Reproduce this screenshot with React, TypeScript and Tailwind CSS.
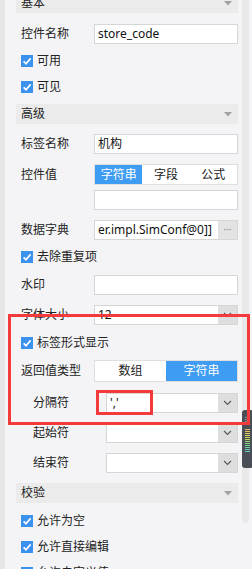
import React from "react";

const Tri = () => (
  <svg width="8" height="5" viewBox="0 0 8 5">
    <path d="M0 0 L8 0 L4 4.5 Z" fill="#a3a3a3" />
  </svg>
);

const Header = ({ title, mt }: { title: string; mt: string }) => (
  <div className={`${mt} h-[20px] shrink-0 bg-[#ebebeb] flex items-center justify-between pl-[5px] pr-[6px] text-[12px] text-[#222]`}>
    <span>{title}</span>
    <Tri />
  </div>
);

const Check = ({ label, mt }: { label: string; mt: string }) => (
  <div className={`${mt} h-[20px] shrink-0 flex items-center pl-[5px] gap-[4px] text-[12px] text-[#222]`}>
    <span className="w-[12px] h-[12px] bg-[#3a91ee] flex items-center justify-center">
      <svg width="12" height="12" viewBox="0 0 12 12">
        <path d="M2.6 6.3 L5 8.7 L9.6 3.4" stroke="#fff" strokeWidth="1.7" fill="none" />
      </svg>
    </span>
    <span>{label}</span>
  </div>
);

const Chevron = () => (
  <svg width="9" height="6" viewBox="0 0 9 6">
    <path d="M1 1 L4.5 4.5 L8 1" stroke="#555" strokeWidth="1.1" fill="none" />
  </svg>
);

const Row = ({
  label,
  mt,
  indent,
  h = "h-[20px]",
  children,
}: {
  label: string;
  mt: string;
  indent?: boolean;
  h?: string;
  children: React.ReactNode;
}) => (
  <div className={`${mt} ${h} shrink-0 flex items-center text-[12px] text-[#222]`}>
    <div className={indent ? "w-[90px] pl-[17px]" : "w-[78px] pl-[5px]"}>{label}</div>
    <div className="flex-1 h-full flex">{children}</div>
  </div>
);

const Input = ({ value = "", btn }: { value?: string; btn?: "dots" | "chev" }) => (
  <div className="flex-1 h-full bg-white border border-[#d6d6d6] flex items-stretch overflow-hidden">
    <div className="flex-1 pl-[3px] flex items-center whitespace-nowrap overflow-hidden text-[#111]">{value}</div>
    {btn === "dots" && (
      <div className="w-[19px] bg-[#e3e3e3] flex items-center justify-center text-[#888] text-[10px] leading-none pb-[2px]">
        ···
      </div>
    )}
    {btn === "chev" && (
      <div className="w-[19px] bg-[#dedede] flex items-center justify-center">
        <Chevron />
      </div>
    )}
  </div>
);

const Seg = ({ items, active }: { items: string[]; active: number }) => (
  <div className="flex-1 h-full bg-white border border-[#dedede] flex">
    {items.map((t, i) => (
      <div
        key={t}
        className={`flex-1 flex items-center justify-center ${i === active ? "bg-[#3f9cf3] text-white" : "text-[#222]"}`}
      >
        {t}
      </div>
    ))}
  </div>
);

export default function App() {
  return (
    <div className="relative w-[252px] h-[569px] overflow-hidden bg-[#f4f4f6] flex font-['Noto_Sans','Noto_Sans_CJK_SC',sans-serif]">
      <div className="w-[5px] shrink-0 bg-[#e6e6e6]" />
      <div className="ml-[11px] w-[222px] shrink-0 flex flex-col">
        <Header title="基本" mt="mt-[-7px]" />
        <Row label="控件名称" mt="mt-[11px]">
          <Input value="store_code" />
        </Row>
        <Check label="可用" mt="mt-[7px]" />
        <Check label="可见" mt="mt-[6px]" />
        <Header title="高级" mt="mt-[7px]" />
        <Row label="标签名称" mt="mt-[10px]">
          <Input value="机构" />
        </Row>
        <Row label="控件值" mt="mt-[10px]" h="h-[21px]">
          <Seg items={["字符串", "字段", "公式"]} active={0} />
        </Row>
        <div className="mt-[5px] h-[20px] shrink-0 pl-[78px] flex">
          <Input />
        </div>
        <Row label="数据字典" mt="mt-[10px]">
          <Input value="er.impl.SimConf@0]]" btn="dots" />
        </Row>
        <Check label="去除重复项" mt="mt-[7px]" />
        <Row label="水印" mt="mt-[8px]">
          <Input />
        </Row>
        <Row label="字体大小" mt="mt-[10px]">
          <Input value="12" btn="chev" />
        </Row>
        <Check label="标签形式显示" mt="mt-[8px]" />
        <Row label="返回值类型" mt="mt-[7px]" h="h-[22px]">
          <Seg items={["数组", "字符串"]} active={1} />
        </Row>
        <Row label="分隔符" mt="mt-[11px]" indent>
          <Input value="','" btn="chev" />
        </Row>
        <Row label="起始符" mt="mt-[10px]" indent>
          <Input btn="chev" />
        </Row>
        <Row label="结束符" mt="mt-[10px]" indent>
          <Input btn="chev" />
        </Row>
        <Header title="校验" mt="mt-[10px]" />
        <Check label="允许为空" mt="mt-[8px]" />
        <Check label="允许直接编辑" mt="mt-[6px]" />
        <Check label="允许自定义值" mt="mt-[6px]" />
      </div>
      <div className="ml-[4px] w-[7px] h-[523px] shrink-0 bg-[#e8e8e8] rounded-b-[4px] relative">
        <div className="absolute left-0 top-[410px] w-[10px] h-[58px] bg-[#4a4e57] rounded-l-[3px] rounded-r-[1px] flex flex-col items-center pt-[7px] gap-[1px]">
          <div className="w-[5px] h-[1px] bg-[#8a8e96]" />
          <div className="w-[5px] h-[1px] bg-[#8a8e96]" />
          <div className="w-[5px] h-[1px] bg-[#8a8e96] mb-[6px]" />
          {["#e8b36a", "#e6c566", "#e3d161", "#dcd85e", "#cbd95e", "#b4d864", "#9ed56e", "#8ad17c", "#7ccf8c", "#72cd9c", "#6cccac", "#67cbbc"].map((c, i) => (
            <div key={i} className="w-[5px] h-[1px]" style={{ backgroundColor: c }} />
          ))}
        </div>
      </div>
      <div className="absolute left-[8px] top-[314px] w-[242px] h-[111px] border-[3px] border-[#f43a3a]" />
      <div className="absolute left-[96px] top-[390px] w-[57px] h-[25px] border-[3px] border-[#f43a3a]" />
    </div>
  );
}
